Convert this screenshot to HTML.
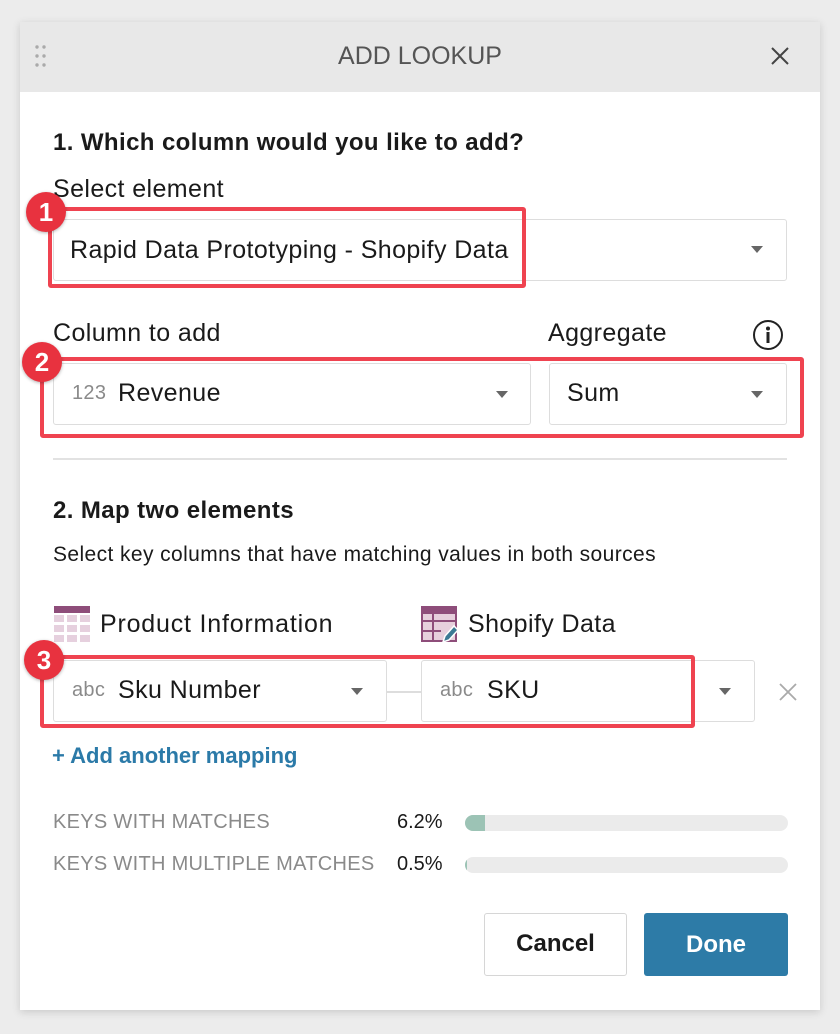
<!DOCTYPE html>
<html><head><style>
*{box-sizing:border-box;margin:0;padding:0}
body{width:840px;height:1034px;background:#ececec;font-family:"Liberation Sans",sans-serif;position:relative;overflow:hidden;color:#1a1a1a}
.dlg{position:absolute;left:20px;top:22px;width:800px;height:988px;background:#fff;box-shadow:0 2px 8px rgba(0,0,0,.15)}
.hdr{position:absolute;left:20px;top:22px;width:800px;height:70px;background:#e8e8e8}
.a{position:absolute;white-space:nowrap}
.sel{position:absolute;border:1.5px solid #ddd;border-radius:3px;background:#fff}
.car{position:absolute;width:0;height:0;border-left:6px solid transparent;border-right:6px solid transparent;border-top:7px solid #666}
.red{position:absolute;border:4px solid #ef4350;border-radius:3px}
.badge{position:absolute;width:40px;height:40px;border-radius:50%;background:#e8323f;color:#fff;font-weight:bold;font-size:26px;text-align:center;line-height:40px;box-shadow:0 1px 3px rgba(0,0,0,.3)}
.t{font-size:25px;letter-spacing:0.4px}
.gray{color:#8a8a8a;font-size:20px;letter-spacing:0.3px}
.bar{position:absolute;left:465px;width:323px;height:16px;border-radius:8px;background:#ebebeb;overflow:hidden}
</style></head><body>
<div class="dlg"></div>
<div class="hdr"></div>
<svg class="a" style="left:34px;top:44px" width="14" height="26"><g fill="#aaa"><circle cx="3" cy="3" r="1.7"/><circle cx="10" cy="3" r="1.7"/><circle cx="3" cy="12" r="1.7"/><circle cx="10" cy="12" r="1.7"/><circle cx="3" cy="21" r="1.7"/><circle cx="10" cy="21" r="1.7"/></g></svg>
<div class="a" style="left:0;width:840px;text-align:center;top:42px;font-size:25px;color:#555;letter-spacing:0px">ADD LOOKUP</div>
<svg class="a" style="left:770px;top:46px" width="20" height="20"><path d="M2 2L18 18M18 2L2 18" stroke="#444" stroke-width="2"/></svg>

<div class="a" style="left:53px;top:129px;font-size:24px;font-weight:bold;letter-spacing:0.4px">1. Which column would you like to add?</div>
<div class="a t" style="left:53px;top:175px">Select element</div>
<div class="sel" style="left:53px;top:219px;width:734px;height:62px"></div>
<div class="a t" style="left:70px;top:236px">Rapid Data Prototyping - Shopify Data</div>
<div class="car" style="left:751px;top:246px"></div>
<div class="red" style="left:48px;top:207px;width:478px;height:81px"></div>
<div class="badge" style="left:26px;top:192px">1</div>

<div class="a t" style="left:53px;top:319px">Column to add</div>
<div class="a t" style="left:548px;top:319px">Aggregate</div>
<svg class="a" style="left:752px;top:319px" width="32" height="32"><circle cx="16" cy="16" r="14" fill="none" stroke="#222" stroke-width="2"/><circle cx="16" cy="9.5" r="2" fill="#222"/><rect x="14.5" y="13" width="3" height="11" fill="#222"/></svg>
<div class="sel" style="left:53px;top:363px;width:478px;height:62px"></div>
<div class="a gray" style="left:72px;top:382px">123</div>
<div class="a t" style="left:118px;top:379px">Revenue</div>
<div class="car" style="left:496px;top:391px"></div>
<div class="sel" style="left:549px;top:363px;width:238px;height:62px"></div>
<div class="a t" style="left:567px;top:379px">Sum</div>
<div class="car" style="left:751px;top:391px"></div>
<div class="red" style="left:40px;top:357px;width:764px;height:81px"></div>
<div class="badge" style="left:22px;top:342px">2</div>

<div class="a" style="left:53px;top:458px;width:734px;height:2px;background:#e2e2e2"></div>
<div class="a" style="left:53px;top:497px;font-size:24px;font-weight:bold;letter-spacing:0.4px">2. Map two elements</div>
<div class="a" style="left:53px;top:543px;font-size:21px;letter-spacing:0.4px">Select key columns that have matching values in both sources</div>

<svg class="a" style="left:54px;top:606px" width="36" height="36"><rect x="0" y="0" width="36" height="7" fill="#8e4d7a"/><g fill="#e6d0de"><rect x="0" y="9" width="10" height="7"/><rect x="13" y="9" width="10" height="7"/><rect x="26" y="9" width="10" height="7"/><rect x="0" y="19" width="10" height="7"/><rect x="13" y="19" width="10" height="7"/><rect x="26" y="19" width="10" height="7"/><rect x="0" y="29" width="10" height="7"/><rect x="13" y="29" width="10" height="7"/><rect x="26" y="29" width="10" height="7"/></g></svg>
<div class="a t" style="left:100px;top:610px;letter-spacing:0.8px">Product Information</div>
<svg class="a" style="left:421px;top:606px" width="38" height="38"><rect x="1" y="1" width="34" height="34" fill="#e6cfdc" stroke="#8e4d7a" stroke-width="2"/><rect x="1" y="1" width="34" height="7" fill="#8e4d7a"/><path d="M1 15H35M1 25H20M12 8V35" stroke="#8e4d7a" stroke-width="2"/><path d="M22 36L24 30L33 20L37 24L28 34Z" fill="#3c7a94" stroke="#fff" stroke-width="1.5"/></svg>
<div class="a t" style="left:468px;top:610px">Shopify Data</div>

<div class="sel" style="left:53px;top:660px;width:334px;height:62px"></div>
<div class="a gray" style="left:72px;top:679px">abc</div>
<div class="a t" style="left:118px;top:676px">Sku Number</div>
<div class="car" style="left:351px;top:688px"></div>
<div class="a" style="left:387px;top:691px;width:34px;height:2px;background:#ddd"></div>
<div class="sel" style="left:421px;top:660px;width:334px;height:62px"></div>
<div class="a gray" style="left:440px;top:679px">abc</div>
<div class="a t" style="left:487px;top:676px">SKU</div>
<div class="car" style="left:719px;top:688px"></div>
<svg class="a" style="left:779px;top:683px" width="18" height="18"><path d="M1 1L17 17M17 1L1 17" stroke="#aaa" stroke-width="1.8"/></svg>
<div class="red" style="left:40px;top:655px;width:655px;height:73px"></div>
<div class="badge" style="left:24px;top:640px">3</div>

<div class="a" style="left:52px;top:743px;font-size:22px;font-weight:bold;color:#2b7aa8;letter-spacing:0px">+ Add another mapping</div>

<div class="a gray" style="left:53px;top:811px">KEYS WITH MATCHES</div>
<div class="a" style="left:397px;top:811px;font-size:20px">6.2%</div>
<div class="bar" style="top:815px"><div style="width:20px;height:16px;background:#9cc3b5"></div></div>
<div class="a gray" style="left:53px;top:853px">KEYS WITH MULTIPLE MATCHES</div>
<div class="a" style="left:397px;top:853px;font-size:20px">0.5%</div>
<div class="bar" style="top:857px"><div style="width:2px;height:16px;background:#9cc3b5"></div></div>

<div class="a" style="left:484px;top:913px;width:143px;height:63px;border:1.5px solid #d6d6d6;border-radius:3px;text-align:center;line-height:60px;font-size:24px;font-weight:bold">Cancel</div>
<div class="a" style="left:644px;top:913px;width:144px;height:63px;background:#2d7ba7;border-radius:3px;text-align:center;line-height:63px;font-size:24px;font-weight:bold;color:#fff">Done</div>
</body></html>
